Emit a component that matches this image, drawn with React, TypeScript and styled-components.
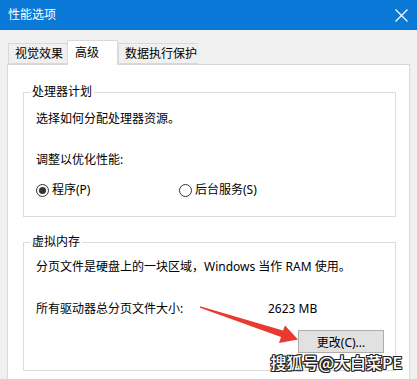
import React from 'react'
import styled, { createGlobalStyle } from 'styled-components';

const GlobalStyle = createGlobalStyle`
    html, body {
        margin: 0;
        padding: 0;
        background: #f0f0f0;
    }
    body {
        font-family: "Noto Sans", "Noto Sans CJK SC", sans-serif;
        font-size: 12px;
        color: #000;
    }
`

const Window = styled.div`
    position: relative;
    width: 417px;
    height: 379px;
    overflow: hidden;
    display: flex;
    flex-direction: column;
    background: #f0f0f0;
`

const TitleBar = styled.div`
    height: 30px;
    flex: none;
    display: flex;
    align-items: center;
    justify-content: space-between;
    background: #0a78d7;
    color: #fff;
    padding-left: 8px;
`

const Title = styled.span`
    font-size: 12px;
    line-height: 16px;
`

const CloseButton = styled.div`
    width: 30px;
    height: 30px;
    display: flex;
    align-items: center;
    justify-content: center;
    margin-right: 1px;
`

const TabRow = styled.div`
    display: flex;
    align-items: flex-end;
    height: 24px;
    margin-top: 10px;
    padding-left: 8px;
    flex: none;
    position: relative;
    z-index: 1;
`

const Tab = styled.div<{ $active?: boolean, $width: number }>`
    box-sizing: border-box;
    width: ${p => p.$width}px;
    height: ${p => p.$active ? 25 : 21}px;
    margin-bottom: ${p => p.$active ? -1 : 0}px;
    padding-left: ${p => p.$active ? 7 : 6}px;
    padding-top: ${p => p.$active ? 4 : 2}px;
    background: ${p => p.$active ? '#fff' : '#f0f0f0'};
    border: 1px solid #d9d9d9;
    border-bottom: ${p => p.$active ? 'none' : '1px solid #d9d9d9'};
    border-right: ${p => p.$active ? '1px solid #d9d9d9' : 'none'};
    line-height: 16px;
    white-space: nowrap;
`

const Panel = styled.div`
    flex: 1;
    margin: 0 7px;
    background: #fff;
    border: 1px solid #d9d9d9;
    border-bottom: none;
    padding: 19px 13px 0 15px;
    display: flex;
    flex-direction: column;
    gap: 17px;
`

const Group = styled.fieldset`
    margin: 0;
    padding: 0;
    border: 1px solid #dcdcdc;
    min-width: 0;
`

const Legend = styled.legend`
    margin-left: 6px;
    padding: 0 2px;
    line-height: 16px;
`

const GroupBody = styled.div<{ $top: number, $bottom: number }>`
    padding: ${p => p.$top}px 11px ${p => p.$bottom}px 12px;
    display: flex;
    flex-direction: column;
`

const Line = styled.div<{ $gap?: number }>`
    line-height: 16px;
    margin-top: ${p => p.$gap || 0}px;
    white-space: nowrap;
`

const RadioRow = styled.div`
    display: flex;
    margin-top: 14px;
    line-height: 16px;
`

const RadioItem = styled.label`
    display: flex;
    align-items: center;
    gap: 3px;
    width: 143px;
`

const RadioCircle = styled.span<{ $checked?: boolean }>`
    box-sizing: border-box;
    width: 13px;
    height: 13px;
    border-radius: 50%;
    border: 1px solid #333;
    display: flex;
    align-items: center;
    justify-content: center;
    &::after {
        content: '';
        display: ${p => p.$checked ? 'block' : 'none'};
        width: 7px;
        height: 7px;
        border-radius: 50%;
        background: #333;
    }
`

const SizeRow = styled.div`
    display: grid;
    grid-template-columns: 232px auto;
    line-height: 16px;
    margin-top: 26px;
`

const ButtonRow = styled.div`
    display: flex;
    justify-content: flex-end;
    margin-top: 13px;
`

const Button = styled.button`
    width: 86px;
    height: 23px;
    background: #e1e1e1;
    border: 1px solid #adadad;
    font: inherit;
    color: #000;
    padding: 0;
`

const Watermark = styled.div`
    position: absolute;
    right: 15px;
    bottom: 8px;
    font-family: "Noto Sans CJK SC", sans-serif;
    font-size: 16px;
    line-height: 18px;
    font-weight: 500;
    color: #fff;
    text-shadow: 1px 0 0 #222, -1px 0 0 #222, 0 1px 0 #222, 0 -1px 0 #222, 1px 1px 0 #222, -1px -1px 0 #222, 1px -1px 0 #222, -1px 1px 0 #222;
    white-space: nowrap;
`

const Arrow = styled.svg`
    position: absolute;
    left: 0;
    top: 0;
    pointer-events: none;
`

function App() {
    return (
        <Window>
            <GlobalStyle />
            <TitleBar>
                <Title>性能选项</Title>
                <CloseButton>
                    <svg width="13" height="13" viewBox="0 0 13 13">
                        <path d="M0.5 0.5 L12.5 12.5 M12.5 0.5 L0.5 12.5" stroke="#fff" strokeWidth="1.2" />
                    </svg>
                </CloseButton>
            </TitleBar>
            <TabRow>
                <Tab $width={59}>视觉效果</Tab>
                <Tab $width={51} $active>高级</Tab>
                <Tab $width={80}>数据执行保护</Tab>
            </TabRow>
            <Panel>
                <Group>
                    <Legend>处理器计划</Legend>
                    <GroupBody $top={11} $bottom={18}>
                        <Line>选择如何分配处理器资源。</Line>
                        <Line $gap={25}>调整以优化性能:</Line>
                        <RadioRow>
                            <RadioItem><RadioCircle $checked />程序(P)</RadioItem>
                            <RadioItem><RadioCircle />后台服务(S)</RadioItem>
                        </RadioRow>
                    </GroupBody>
                </Group>
                <Group>
                    <Legend>虚拟内存</Legend>
                    <GroupBody $top={9} $bottom={17}>
                        <Line>分页文件是硬盘上的一块区域，Windows 当作 RAM 使用。</Line>
                        <SizeRow>
                            <span>所有驱动器总分页文件大小:</span>
                            <span>2623 MB</span>
                        </SizeRow>
                        <ButtonRow>
                            <Button>更改(C)...</Button>
                        </ButtonRow>
                    </GroupBody>
                </Group>
            </Panel>
            <Arrow width="417" height="379" viewBox="0 0 417 379">
                <polygon
                    points="200,306.3 283,330.5 285,325.5 298,339.5 279,343 281,337 200,307.7"
                    fill="#e83a2e"
                />
            </Arrow>
            <Watermark>搜狐号@大白菜PE</Watermark>
        </Window>
    )
}

export default App
